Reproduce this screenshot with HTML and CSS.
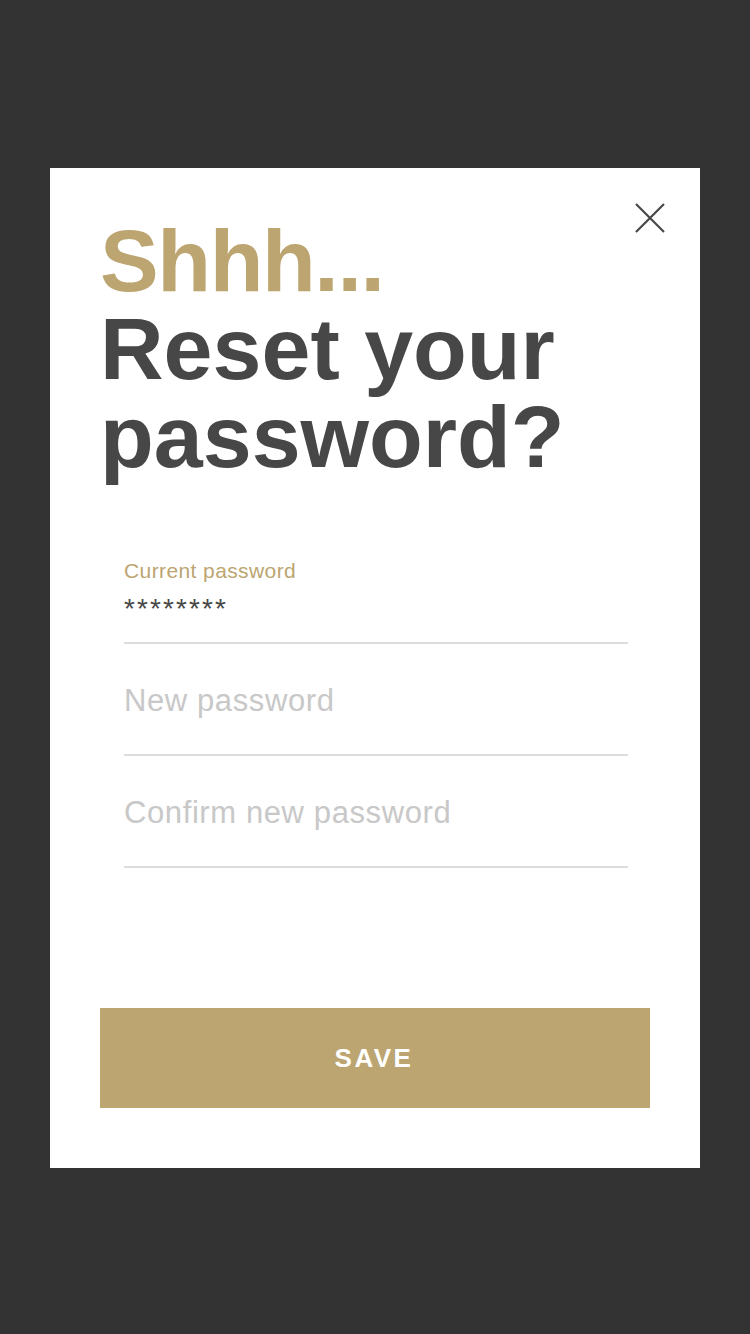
FILE: index.html
```html
<!DOCTYPE html>
<html lang="en">
<head>
<meta charset="utf-8">
<title>Reset your password</title>
<link rel="stylesheet" href="styles.css">
</head>
<body>
<div class="overlay">
  <div class="modal">
    <button class="close" aria-label="Close">
      <svg width="30" height="30" viewBox="0 0 30 30"><path d="M1 1 L29 29 M29 1 L1 29" stroke="#474747" stroke-width="2.2" fill="none"/></svg>
    </button>
    <h1 class="title"><span class="gold">Shhh...</span><br>Reset your<br>password?</h1>
    <form class="form">
      <div class="field field-filled">
        <label class="label">Current password</label>
        <div class="value">********</div>
      </div>
      <div class="field">
        <div class="placeholder">New password</div>
      </div>
      <div class="field">
        <div class="placeholder">Confirm new password</div>
      </div>
    </form>
    <button class="save">SAVE</button>
  </div>
</div>
</body>
</html>
```
FILE: styles.css
```css
html, body {
  margin: 0;
  padding: 0;
  background: #333333;
}
body {
  font-family: "Liberation Sans", Arial, sans-serif;
}
.overlay {
  width: 750px;
  height: 1334px;
  padding-top: 168px;
  box-sizing: border-box;
}
.modal {
  position: relative;
  margin: 0 50px;
  width: 650px;
  height: 1000px;
  background: #ffffff;
  box-sizing: border-box;
  padding: 49px 50px 0 50px;
}
.close {
  position: absolute;
  top: 35px;
  right: 35px;
  width: 30px;
  height: 30px;
  padding: 0;
  border: 0;
  background: none;
}
.close svg { display: block; }
.title {
  margin: 0;
  font-size: 88px;
  line-height: 88px;
  font-weight: 700;
  color: #474747;
  letter-spacing: 0;
}
.gold {
  color: #bca571;
  letter-spacing: -1.4px;
}
.form {
  margin: 78px 22px 0 24px;
}
.field {
  border-bottom: 2px solid #dcdcdc;
  padding: 39px 0 35px;
}
.field-filled {
  padding: 0 0 17px;
}
.label {
  display: block;
  font-size: 21px;
  line-height: 24px;
  letter-spacing: 0.4px;
  color: #bca571;
}
.value {
  margin-top: 10px;
  font-size: 28px;
  line-height: 32px;
  letter-spacing: 2.1px;
  color: #474747;
}
.placeholder {
  font-size: 31px;
  line-height: 36px;
  letter-spacing: 0.6px;
  color: #c8c8c8;
}
.save {
  display: block;
  margin-top: 140px;
  width: 550px;
  height: 100px;
  border: 0;
  background: #bca571;
  color: #ffffff;
  font-family: "Liberation Sans", Arial, sans-serif;
  font-weight: 700;
  font-size: 26px;
  letter-spacing: 2.5px;
  padding: 0 2px 0 0;
}
```
